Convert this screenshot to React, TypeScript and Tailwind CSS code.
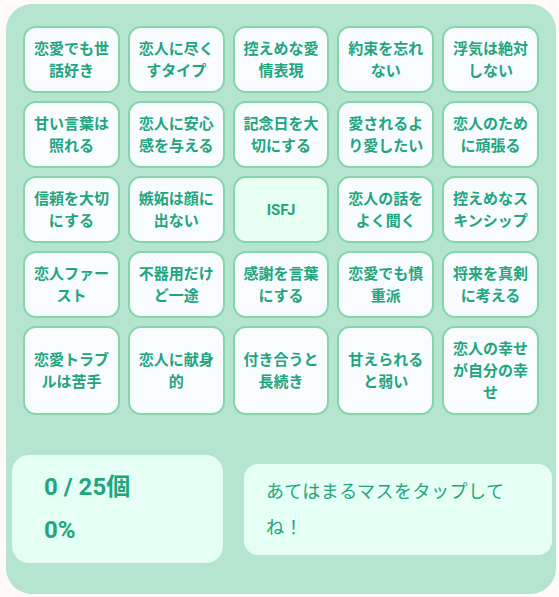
import React from "react";

const cells = [
  "恋愛でも世話好き",
  "恋人に尽くすタイプ",
  "控えめな愛情表現",
  "約束を忘れない",
  "浮気は絶対しない",
  "甘い言葉は照れる",
  "恋人に安心感を与える",
  "記念日を大切にする",
  "愛されるより愛したい",
  "恋人のために頑張る",
  "信頼を大切にする",
  "嫉妬は顔に出ない",
  "ISFJ",
  "恋人の話をよく聞く",
  "控えめなスキンシップ",
  "恋人ファースト",
  "不器用だけど一途",
  "感謝を言葉にする",
  "恋愛でも慎重派",
  "将来を真剣に考える",
  "恋愛トラブルは苦手",
  "恋人に献身的",
  "付き合うと長続き",
  "甘えられると弱い",
  "恋人の幸せが自分の幸せ",
];

export default function App() {
  return (
    <div
      className="w-[559px] h-[597px] bg-[#fffaf7] pt-[4px] pl-[6px]"
      style={{ fontFamily: 'Roboto, "Noto Sans CJK JP", sans-serif' }}
    >
      <div className="w-[550px] h-[590px] bg-[#b5e4cf] rounded-[26px] pt-[22px] flex flex-col">
        <div className="w-[516px] mx-auto grid grid-cols-5 gap-x-[8px] gap-y-[8px]">
          {cells.map((c, i) => (
            <div
              key={i}
              className={`flex items-center justify-center text-center border-2 border-[#84d5aa] rounded-[13px] px-[6px] py-[9.5px] min-h-[67px] text-[15px] leading-[22px] font-bold text-[#22a57e] ${
                c === "ISFJ" ? "bg-[#e8fff4]" : "bg-[#f8fcff]"
              }`}
            >
              {c}
            </div>
          ))}
        </div>
        <div className="mt-[40px] ml-[6px] flex items-center">
          <div className="w-[211px] h-[108px] bg-[#e5fff4] rounded-[17px] pl-[32px] py-[11px] text-[24px] leading-[43px] font-bold text-[#22a57e]">
            <div>0 / 25個</div>
            <div>0%</div>
          </div>
          <div className="ml-[21px] w-[308px] h-[91px] bg-[#e5fff4] rounded-[14px] pl-[22px] pr-[40px] py-[10px] text-[18px] leading-[36px] tracking-[0.5px] text-[#22a57e]">
            あてはまるマスをタップしてね！
          </div>
        </div>
      </div>
    </div>
  );
}
